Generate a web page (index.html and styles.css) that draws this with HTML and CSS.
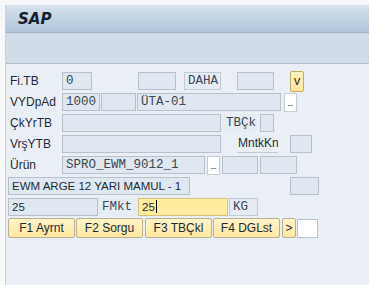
FILE: index.html
```html
<!DOCTYPE html>
<html lang="tr">
<head>
  <meta charset="UTF-8">
  <meta name="viewport" content="width=device-width, initial-scale=1.0">
  <title>SAP</title>
  <link rel="stylesheet" href="styles.css">
</head>
<body>
  <div class="window">
    <div class="titlebar"><span class="logo">SAP</span></div>
    <div class="toolbar"></div>
    <div class="screen">
      <div class="row">
        <span class="lbl">Fi.TB</span>
        <span class="fld mono w30">0</span>
        <span class="fld w38 ml46"></span>
        <span class="tag mono w37 ml8">DAHA</span>
        <span class="fld w37 ml16"></span>
        <button class="vbtn mono ml16">v</button>
      </div>
      <div class="row">
        <span class="lbl">VYDpAd</span>
        <span class="fld mono w38">1000</span>
        <span class="fld w35 ml1"></span>
        <span class="fld mono w144 ml1">ÜTA-01</span>
        <span class="help ml3"></span>
      </div>
      <div class="row">
        <span class="lbl">ÇkYrTB</span>
        <span class="fld w159"></span>
        <span class="tag plain mono w36 ml1">TBÇk</span>
        <span class="fld w14 ml2"></span>
      </div>
      <div class="row">
        <span class="lbl">VrşYTB</span>
        <span class="fld w159"></span>
        <span class="under w41 ml16">MntkKn</span>
        <span class="fld w22 ml12"></span>
      </div>
      <div class="row">
        <span class="lbl">Ürün</span>
        <span class="fld mono w143">SPRO_EWM_9012_1</span>
        <span class="help ml2"></span>
        <span class="fld w36 ml2"></span>
        <span class="fld w37 ml2"></span>
      </div>
      <div class="row">
        <span class="fld w182">EWM ARGE 12 YARI MAMUL - 1</span>
        <span class="fld w29 ml100"></span>
      </div>
      <div class="row">
        <span class="fld w90">25</span>
        <span class="tag plain mono w40">FMkt</span>
        <span class="fld active w90">25<span class="caret"></span></span>
        <span class="tag mono w29 ml1">KG</span>
      </div>
      <div class="row keys">
        <button class="key w67">F1 Ayrnt</button>
        <button class="key w67 ml1">F2 Sorgu</button>
        <button class="key w67 ml2">F3 TBÇkl</button>
        <button class="key w67 ml1">F4 DGLst</button>
        <button class="key w14 ml2">&gt;</button>
        <span class="fld white w21 ml1"></span>
      </div>
    </div>
  </div>
</body>
</html>
```

FILE: styles.css
```css
body {
  margin: 0;
  background-color: #f6f8fa;
  font-family: 'Liberation Sans', Arial, sans-serif;
  font-size: 11.5px;
  color: #1d2a36;
}
.window {
  margin: 5px 0 0 5px;
  height: 280px;
  border-left: 1px solid #c9d3dc;
  display: flex;
  flex-direction: column;
}
.titlebar {
  height: 27px;
  background: linear-gradient(#d6e2ed, #afc5da);
  border-bottom: 1px solid #9fb5ca;
  display: flex;
  align-items: center;
  padding-left: 12px;
}
.logo {
  font-family: 'DejaVu Sans', sans-serif;
  font-weight: bold;
  font-style: italic;
  font-size: 15px;
  color: #14202c;
}
.toolbar {
  height: 30px;
  background-color: #d0dde9;
  border-bottom: 1px solid #aebfd0;
}
.screen {
  flex: 1;
  background-color: #e9eff5;
  padding: 8px 0 0 2px;
  display: flex;
  flex-direction: column;
  gap: 3px;
}
.row {
  display: flex;
  align-items: center;
  height: 18px;
}
.lbl {
  width: 54px;
  padding-left: 2px;
  box-sizing: border-box;
  font-size: 12px;
}
.fld, .tag, .under {
  box-sizing: border-box;
  height: 18px;
  line-height: 16px;
  padding-left: 3px;
  white-space: nowrap;
  overflow: hidden;
}
.fld {
  background-color: #dfe8f1;
  border: 1px solid #b7c1cb;
}
.fld.active {
  background-color: #ffee9f;
  border-color: #d6c27c;
}
.fld.white {
  background-color: #fff;
  height: 19px;
}
.caret {
  display: inline-block;
  width: 1px;
  height: 13px;
  background-color: #000;
  vertical-align: -2px;
  margin-left: 1px;
}
.tag {
  background-color: #e5ecf3;
  border: 1px solid #c3ccd5;
}
.tag.plain {
  border-color: #e5ecf3;
}
.under {
  border-bottom: 1px solid #c2ccd6;
  padding-left: 1px;
  font-size: 12px;
}
.mono {
  font-family: 'Liberation Mono', 'Courier New', monospace;
  font-size: 12.5px;
  color: #3c4752;
}
.help {
  box-sizing: border-box;
  width: 13px;
  height: 19px;
  background-color: #fff;
  border: 1px solid #c3cbd3;
  position: relative;
}
.help::after {
  content: '';
  position: absolute;
  left: 3px;
  bottom: 5px;
  width: 5px;
  height: 1px;
  background-color: #8a939c;
}
.vbtn {
  box-sizing: border-box;
  width: 14px;
  height: 21px;
  margin-top: -1px;
  margin-bottom: -2px;
  padding: 0;
  background: linear-gradient(#fff2c0, #ffe69a);
  border: 1px solid #c6ad5c;
  border-radius: 2px;
  font-size: 12px;
  color: #3a2a00;
}
.keys {
  height: 20px;
  margin-top: -1px;
}
.key {
  box-sizing: border-box;
  height: 20px;
  padding: 0;
  background: linear-gradient(#fff4c8, #ffe79f);
  border: 1px solid #b9b193;
  border-radius: 2px;
  font-family: 'Liberation Sans', Arial, sans-serif;
  font-size: 12px;
  color: #1d2a36;
}
.w14 { width: 14px; }
.w21 { width: 21px; }
.w22 { width: 22px; }
.w29 { width: 29px; }
.w30 { width: 30px; }
.w35 { width: 35px; }
.w36 { width: 36px; }
.w37 { width: 37px; }
.w38 { width: 38px; }
.w40 { width: 40px; }
.w41 { width: 41px; }
.w67 { width: 67px; }
.w90 { width: 90px; }
.w143 { width: 143px; }
.w144 { width: 144px; }
.w159 { width: 159px; }
.w182 { width: 182px; }
.ml1 { margin-left: 1px; }
.ml2 { margin-left: 2px; }
.ml3 { margin-left: 3px; }
.ml8 { margin-left: 8px; }
.ml12 { margin-left: 12px; }
.ml16 { margin-left: 16px; }
.ml46 { margin-left: 46px; }
.ml100 { margin-left: 100px; }
```
